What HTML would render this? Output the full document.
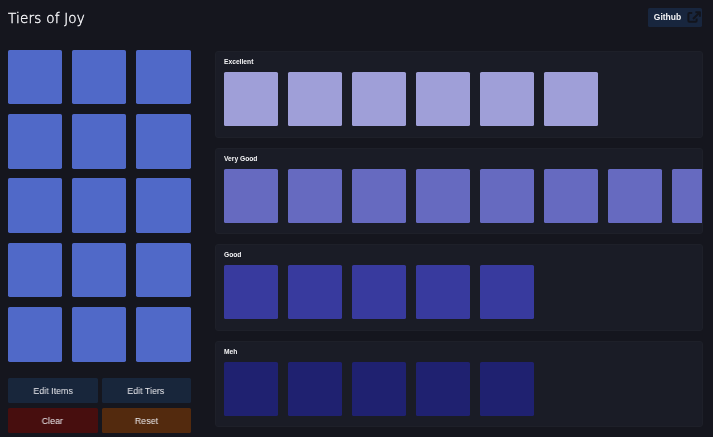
<!DOCTYPE html>
<html lang="en"><head><meta charset="utf-8"><title>Tiers of Joy</title>
<style>
*{box-sizing:border-box;margin:0;padding:0}
html,body{width:713px;height:437px;overflow:hidden;background:#15161e;color:#fff;font-family:"Liberation Sans",sans-serif}
.abs{position:absolute}
h1{position:absolute;left:7.7px;top:7.6px;font-family:"DejaVu Sans","Liberation Sans",sans-serif;font-weight:200;-webkit-text-stroke:0.4px #f2f2f5;font-size:13.5px;line-height:20px;letter-spacing:0.23px;color:#f2f2f5;white-space:nowrap;will-change:transform}
.gh{position:absolute;left:647.8px;top:8px;width:54.4px;height:18.8px;background:#18263e;border-radius:1.6px;font-weight:700;font-size:8.5px;line-height:19.8px;padding-left:5.8px;color:#f4f4f6;will-change:transform}
.gh svg{position:absolute;left:38px;top:2px;width:16px;height:14px}
.item{position:absolute;width:54.4px;height:54.5px;border-radius:1.7px;background:#5069c8}
.panel{position:absolute;left:214.6px;width:488px;height:86.7px;background:#1a1c26;border:1px solid #1e2029;border-radius:3px;overflow:hidden}
.panel .lbl{position:absolute;left:8px;top:4.6px;font-weight:700;font-size:6.7px;line-height:10px;color:#f4f4f6;white-space:nowrap;will-change:transform}
.panel .sq{position:absolute;top:20px;width:54.2px;height:54.2px;border-radius:1.6px}
.btn{position:absolute;height:25px;width:89px;text-align:center;font-size:9.5px;line-height:25px;color:#ececf0;border-radius:1.5px}
.btn span{display:inline-block;transform:scaleX(0.935);will-change:transform}
</style></head><body>
<h1>Tiers of Joy</h1>
<div class="gh">Github<svg viewBox="686 10 16 14" fill="none" stroke="#12141c" stroke-width="2" stroke-linejoin="round"><path d="M692.2 13H689.4a1 1 0 0 0-1 1V20.8a1 1 0 0 0 1 1H695.6a1 1 0 0 0 1-1V18.4"/><path d="M695.4 12.2H699.9V16.7M699.7 12.4L693 19"/></svg></div>

<div class="item" style="left:8px;top:49.8px"></div>
<div class="item" style="left:72.1px;top:49.8px"></div>
<div class="item" style="left:136.2px;top:49.8px"></div>
<div class="item" style="left:8px;top:114.1px"></div>
<div class="item" style="left:72.1px;top:114.1px"></div>
<div class="item" style="left:136.2px;top:114.1px"></div>
<div class="item" style="left:8px;top:178.4px"></div>
<div class="item" style="left:72.1px;top:178.4px"></div>
<div class="item" style="left:136.2px;top:178.4px"></div>
<div class="item" style="left:8px;top:242.7px"></div>
<div class="item" style="left:72.1px;top:242.7px"></div>
<div class="item" style="left:136.2px;top:242.7px"></div>
<div class="item" style="left:8px;top:307px"></div>
<div class="item" style="left:72.1px;top:307px"></div>
<div class="item" style="left:136.2px;top:307px"></div>
<div class="panel" style="top:51px"><div class="lbl" style="top:4.6px">Excellent</div>
<div class="sq" style="left:8px;background:#9f9fd8"></div>
<div class="sq" style="left:72px;background:#9f9fd8"></div>
<div class="sq" style="left:136px;background:#9f9fd8"></div>
<div class="sq" style="left:200px;background:#9f9fd8"></div>
<div class="sq" style="left:264px;background:#9f9fd8"></div>
<div class="sq" style="left:328px;background:#9f9fd8"></div>
</div>
<div class="panel" style="top:147.6px"><div class="lbl" style="top:5.5px">Very Good</div>
<div class="sq" style="left:8px;background:#666ac0"></div>
<div class="sq" style="left:72px;background:#666ac0"></div>
<div class="sq" style="left:136px;background:#666ac0"></div>
<div class="sq" style="left:200px;background:#666ac0"></div>
<div class="sq" style="left:264px;background:#666ac0"></div>
<div class="sq" style="left:328px;background:#666ac0"></div>
<div class="sq" style="left:392px;background:#666ac0"></div>
<div class="sq" style="left:456px;background:#666ac0"></div>
</div>
<div class="panel" style="top:244.2px"><div class="lbl" style="top:4.9px">Good</div>
<div class="sq" style="left:8px;background:#383a9e"></div>
<div class="sq" style="left:72px;background:#383a9e"></div>
<div class="sq" style="left:136px;background:#383a9e"></div>
<div class="sq" style="left:200px;background:#383a9e"></div>
<div class="sq" style="left:264px;background:#383a9e"></div>
</div>
<div class="panel" style="top:340.8px"><div class="lbl" style="top:5.3px">Meh</div>
<div class="sq" style="left:8px;background:#1f2170"></div>
<div class="sq" style="left:72px;background:#1f2170"></div>
<div class="sq" style="left:136px;background:#1f2170"></div>
<div class="sq" style="left:200px;background:#1f2170"></div>
<div class="sq" style="left:264px;background:#1f2170"></div>
</div>
<div class="btn" style="left:8px;top:378px;width:89.6px;background:#18263b"><span>Edit Items</span></div>
<div class="btn" style="left:101.8px;top:378px;width:88.8px;background:#18263b"><span>Edit Tiers</span></div>
<div class="btn" style="left:8px;top:408px;width:89.6px;background:#470e0e"><span>Clear</span></div>
<div class="btn" style="left:101.8px;top:408px;width:88.8px;background:#532a0e"><span>Reset</span></div>
</body></html>
